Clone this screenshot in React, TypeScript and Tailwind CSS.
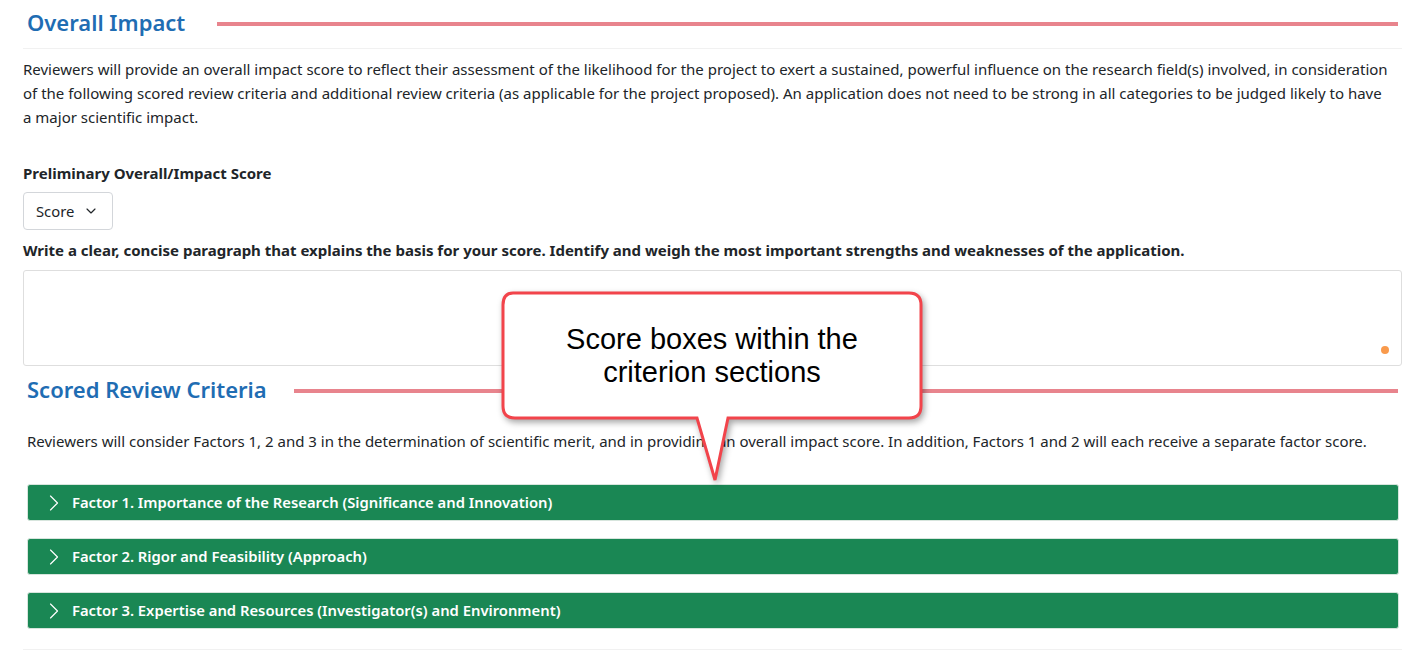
import { ChevronDown, ChevronRight } from "lucide-react";

const font = { fontFamily: '"Noto Sans", "Open Sans", sans-serif' };

function SectionHeading({ title, gap }: { title: string; gap: string }) {
  return (
    <div className="flex items-center pl-1">
      <h2 className="text-[22px] font-semibold leading-[32px] text-[#1f6db3]">{title}</h2>
      <div className={`${gap} mr-1 mt-1 h-[4px] flex-1 bg-[#e8848d]`} />
    </div>
  );
}

function Factor({ label }: { label: string }) {
  return (
    <button className="flex h-[37px] w-full items-center rounded-[3px] border border-[#d7e5dd] bg-[#1a8754] pl-[12px] text-left text-[14.8px] font-semibold text-white">
      <ChevronRight className="mr-[4px] h-[28px] w-[28px]" strokeWidth={1} />
      {label}
    </button>
  );
}

export default function App() {
  return (
    <div className="relative min-h-[658px] bg-white px-[23px] text-[#212529]" style={font}>
      <div className="pt-[6px]">
        <SectionHeading title="Overall Impact" gap="ml-8" />
      </div>
      <hr className="mt-[10px] border-[#f1f1f1]" />
      <p className="mt-[8px] pr-[12px] text-[15px] leading-[24px]">
        Reviewers will provide an overall impact score to reflect their assessment of the likelihood for the project to exert a sustained, powerful influence on the research field(s) involved, in consideration of the following scored review criteria and additional review criteria (as applicable for the project proposed). An application does not need to be strong in all categories to be judged likely to have a major scientific impact.
      </p>

      <div className="mt-[34px] text-[15px] font-bold leading-[20px]">Preliminary Overall/Impact Score</div>
      <button className="mt-[9px] flex h-[38px] w-[90px] items-center gap-[9px] rounded-[4px] border border-[#d3d6da] pl-[12px] text-[14.8px]">
        Score
        <ChevronDown className="h-[16px] w-[16px]" strokeWidth={1.75} />
      </button>
      <div className="mt-[10px] text-[15px] font-bold leading-[20px]">
        Write a clear, concise paragraph that explains the basis for your score. Identify and weigh the most important strengths and weaknesses of the application.
      </div>
      <div className="relative mt-[10px] h-[96px] rounded-[3px] border border-[#dedede]">
        <span className="absolute bottom-[11px] right-[12px] h-[8px] w-[8px] rounded-full bg-[#f99a4c]" />
      </div>

      <div className="mt-[7px]">
        <SectionHeading title="Scored Review Criteria" gap="ml-[27px]" />
      </div>
      <p className="mt-[24px] pl-1 text-[15px] leading-[24px]">
        Reviewers will consider Factors 1, 2 and 3 in the determination of scientific merit, and in providing an overall impact score. In addition, Factors 1 and 2 will each receive a separate factor score.
      </p>
      <div className="mt-[31px] flex flex-col gap-[17px] pl-1 pr-[3px]">
        <Factor label="Factor 1. Importance of the Research (Significance and Innovation)" />
        <Factor label="Factor 2. Rigor and Feasibility (Approach)" />
        <Factor label="Factor 3. Expertise and Resources (Investigator(s) and Environment)" />
      </div>
      <hr className="mt-[20px] border-[#f1f1f1]" />

      {/* annotation callout */}
      <div className="absolute left-[499px] top-[290px] h-[195px] w-[428px]">
        <svg width="428" height="195" viewBox="0 0 428 195" className="absolute inset-0 drop-shadow-[2px_3px_3px_rgba(0,0,0,0.35)]">
          <path
            d="M14 3 H410 Q422 3 422 15 V116 Q422 128 410 128 H229 L216 190 L198 128 H16 Q4 128 4 116 V15 Q4 3 14 3 Z"
            fill="#fff"
            stroke="#f2444b"
            strokeWidth="3"
            strokeLinejoin="miter"
          />
        </svg>
        <div
          className="absolute left-[4px] top-[33px] w-[418px] text-center text-[29px] leading-[33px] text-black"
          style={{ fontFamily: '"Liberation Sans", Arial, sans-serif' }}
        >
          Score boxes within the
          <br />
          criterion sections
        </div>
      </div>
    </div>
  );
}
